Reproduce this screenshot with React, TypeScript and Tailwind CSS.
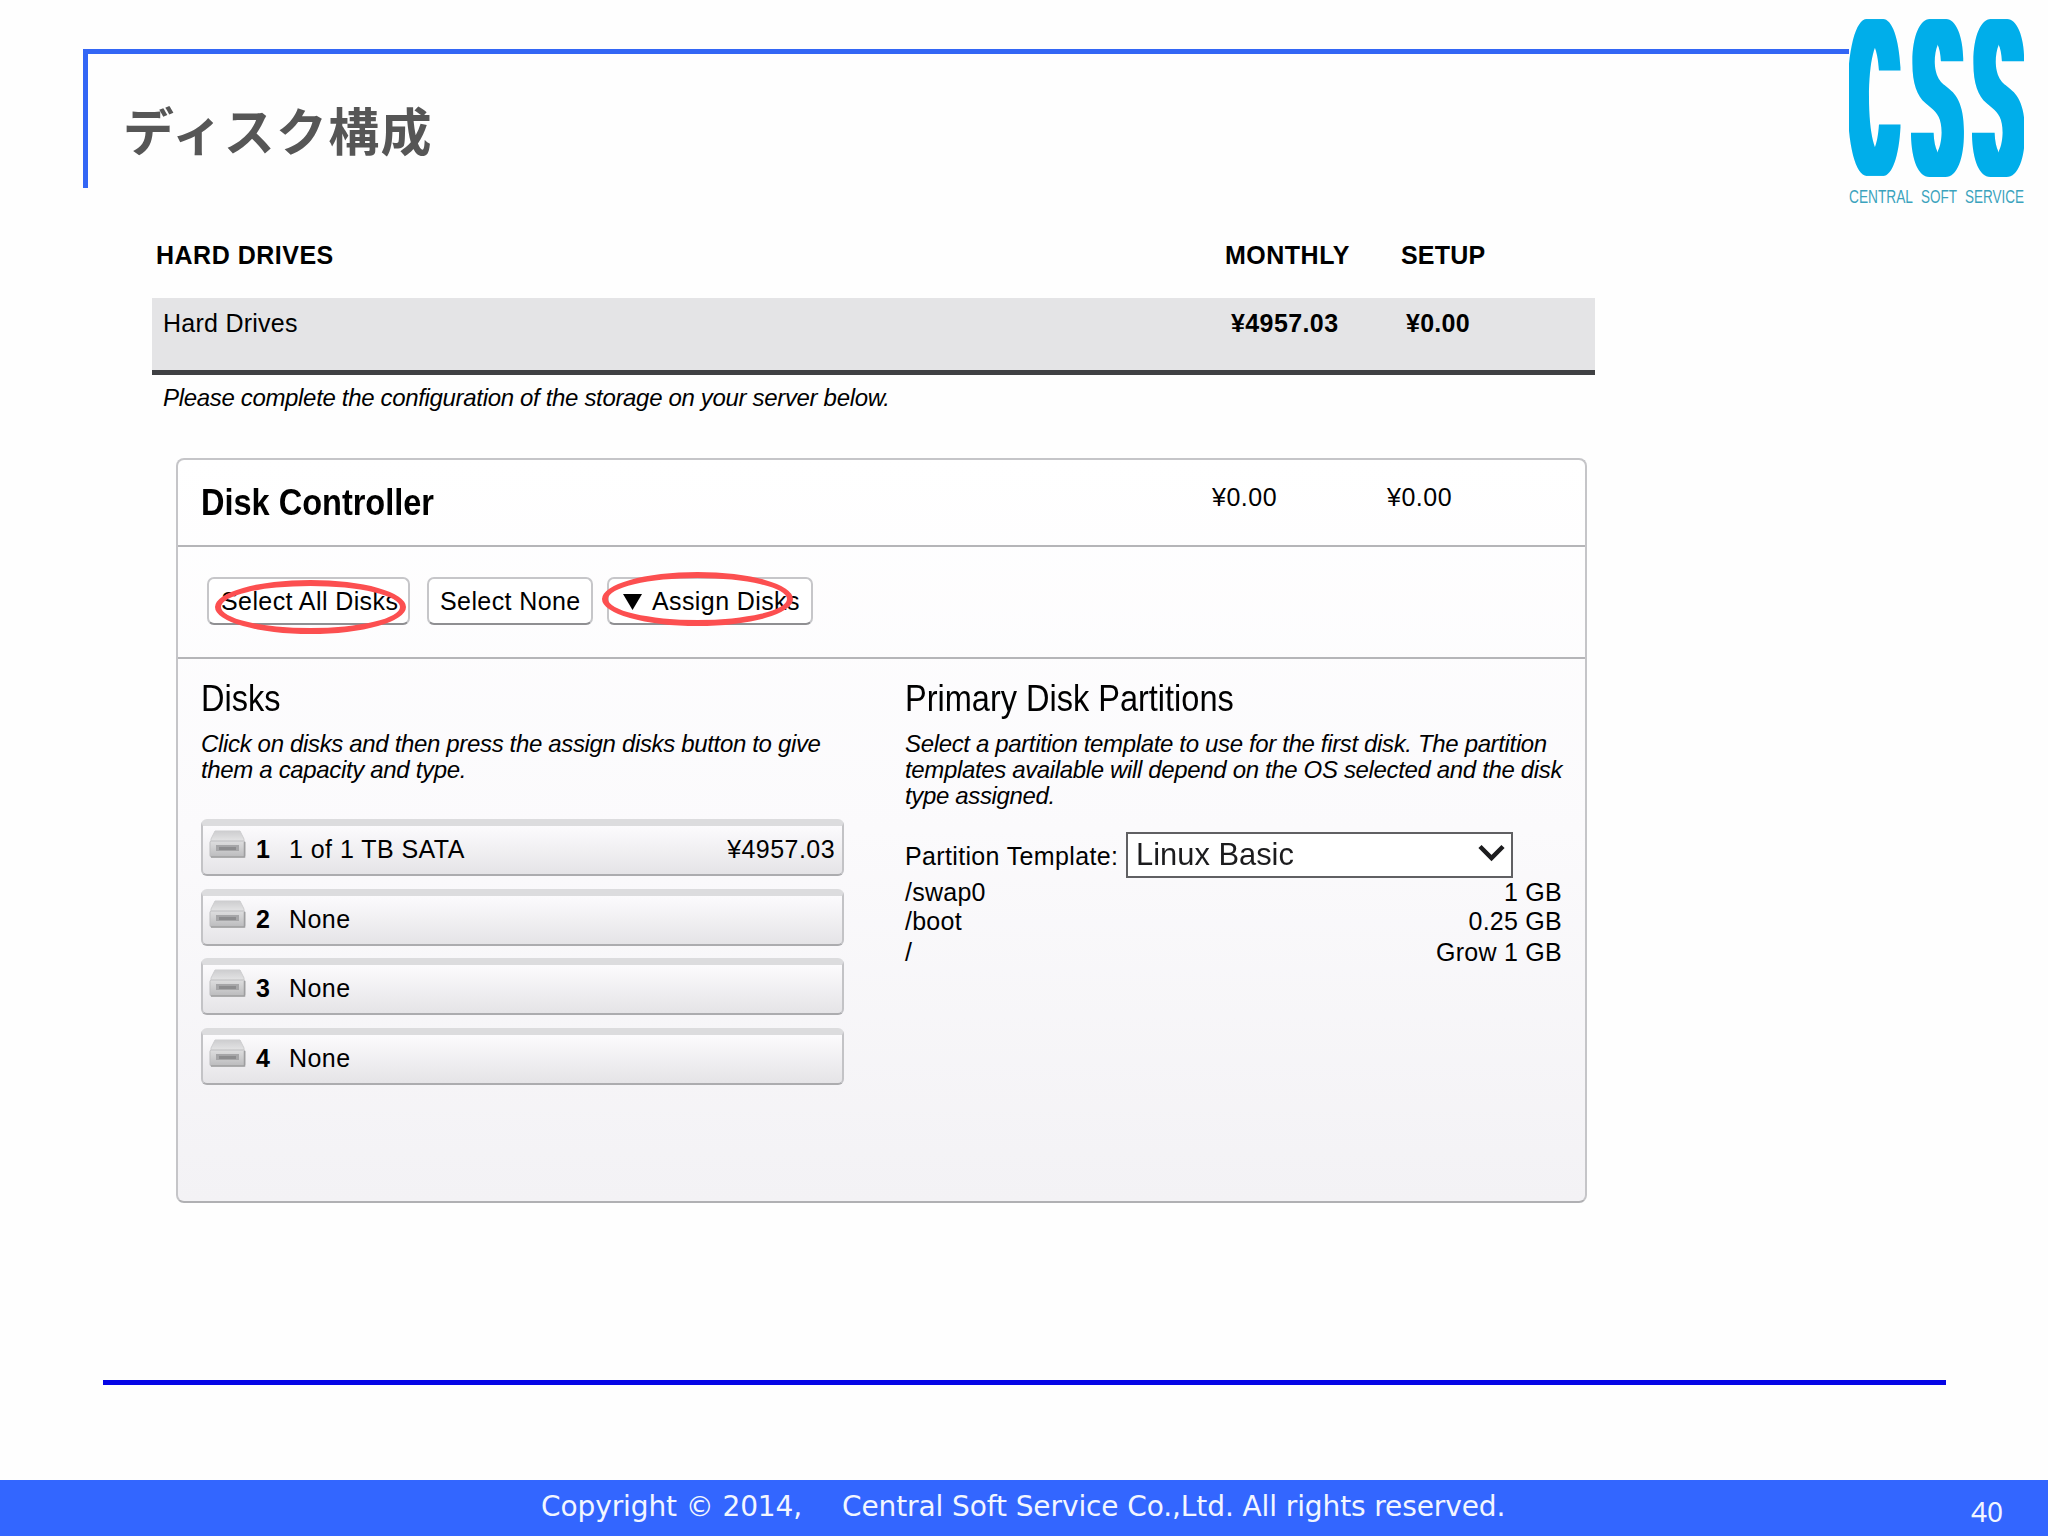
import { useState } from "react";
import { clsx } from "clsx";

interface Disk {
  slot: number;
  label: string;
  price?: string;
}

interface Partition {
  mount: string;
  size: string;
  height: string;
}

const disks: Disk[] = [
  { slot: 1, label: "1 of 1 TB SATA", price: "¥4957.03" },
  { slot: 2, label: "None" },
  { slot: 3, label: "None" },
  { slot: 4, label: "None" },
];

const partitions: Partition[] = [
  { mount: "/swap0", size: "1 GB", height: "h-[28px]" },
  { mount: "/boot", size: "0.25 GB", height: "h-[29px]" },
  { mount: "/", size: "Grow 1 GB", height: "h-[31px]" },
];

function Logo() {
  return (
    <svg
      className="mt-[19px] h-[190px] w-[175px] shrink-0"
      viewBox="0 0 175 190"
      aria-label="CSS Central Soft Service"
    >
      <defs>
        {/* fattens the stems sideways, so the tall letters keep an even stroke */}
        <filter id="stems" filterUnits="userSpaceOnUse" x="0" y="0" width="175" height="160">
          <feMorphology operator="dilate" radius="8 1" />
        </filter>
      </defs>
      <g
        fill="#06aeea"
        filter="url(#stems)"
        fontFamily="Inter, sans-serif"
        fontSize="100"
        fontWeight="400"
      >
        <text transform="translate(3 153.500) scale(0.6 2.07)">C</text>
        <text transform="translate(66 153.500) scale(0.7 2.07)">S</text>
        <text transform="translate(127 153.500) scale(0.7 2.07)">S</text>
      </g>
      <g fill="#3ba3bd" fontFamily="'Liberation Sans', Arial, sans-serif" fontSize="18">
        <text x="0" y="184" textLength="64" lengthAdjust="spacingAndGlyphs">
          CENTRAL
        </text>
        <text x="72" y="184" textLength="36" lengthAdjust="spacingAndGlyphs">
          SOFT
        </text>
        <text x="116" y="184" textLength="59" lengthAdjust="spacingAndGlyphs">
          SERVICE
        </text>
      </g>
    </svg>
  );
}

function DiskIcon() {
  return (
    <svg className="h-[28px] w-[37px]" viewBox="0 0 37 28" aria-hidden="true">
      <defs>
        <linearGradient id="diskTop" x1="0" y1="0" x2="0" y2="1">
          <stop offset="0" stopColor="#cdcdcf" />
          <stop offset="1" stopColor="#e6e6e7" />
        </linearGradient>
        <linearGradient id="diskFront" x1="0" y1="0" x2="0" y2="1">
          <stop offset="0" stopColor="#dededf" />
          <stop offset="1" stopColor="#bbbbbd" />
        </linearGradient>
      </defs>
      <path d="M6 1h25l4 8v3H2V9z" fill="url(#diskTop)" stroke="#cdcdcf" />
      <rect x="1" y="11" width="35" height="16" rx="1.5" fill="url(#diskFront)" stroke="#bdbdbf" />
      <path d="M2 27h33.500V12" fill="none" stroke="#9e9ea0" strokeWidth="1.500" />
      <rect x="7" y="15" width="23" height="6" fill="#a6a6a8" />
      <rect x="10" y="17" width="17" height="3" fill="#8c8c8e" />
    </svg>
  );
}

function ToolButton({ children, className }: { children: React.ReactNode; className: string }) {
  return (
    <button
      type="button"
      className={clsx(
        "flex h-[48px] items-center rounded-[7px] border-2 border-[#c6c6c9] border-b-[#8f8f92] bg-white pt-[2px] tracking-[0.400px] whitespace-nowrap",
        className,
      )}
    >
      {children}
    </button>
  );
}

function Highlight({ className }: { className: string }) {
  return (
    <span
      className={clsx(
        "pointer-events-none absolute h-[54px] w-[191px] rounded-[50%] border-[6px] border-[#fc4f50]",
        className,
      )}
    />
  );
}

function DiskRow({ disk }: { disk: Disk }) {
  return (
    <li className="flex h-[57px] items-start rounded-[6px] border-x-2 border-t-[7px] border-b-2 border-x-[#c3c3c6] border-t-[#dcdcde] border-b-[#acacaf] bg-linear-to-b from-[#fcfbfd] to-[#e5e4e7] pl-[6px] tracking-[0.450px]">
      <span className="mt-[4px]">
        <DiskIcon />
      </span>
      <span className="mt-[9px] w-[41px] pl-[10px] leading-[28px] font-bold">{disk.slot}</span>
      <span className="mt-[9px] pl-[2px] leading-[28px]">{disk.label}</span>
      {disk.price && (
        <span className="mt-[9px] mr-[7px] ml-auto leading-[28px]">{disk.price}</span>
      )}
    </li>
  );
}

function PartitionPanel() {
  const [template] = useState("Linux Basic");

  return (
    <div className="w-[660px]">
      <h3 className="mt-[20px] h-[40px] origin-left scale-x-[0.903] text-[36px] leading-[40px] tracking-normal whitespace-nowrap">
        Primary Disk Partitions
      </h3>
      <p className="mt-[12px] text-[24px] leading-[26px] tracking-[-0.35px] whitespace-nowrap italic">
        Select a partition template to use for the first disk. The partition
        <br />
        templates available will depend on the OS selected and the disk
        <br />
        type assigned.
      </p>
      <div className="mt-[23px] flex h-[46px] items-center">
        <span className="w-[221px] pt-[4px] tracking-[0.350px] whitespace-nowrap">
          Partition Template:
        </span>
        <button
          type="button"
          className="flex h-[46px] w-[387px] items-center justify-between border-2 border-[#606063] bg-white pr-[6px] pl-[8px] text-[32px] leading-none tracking-normal text-[#1c1c1e]"
        >
          <span className="-mt-[2px] origin-left scale-x-[0.965]">{template}</span>
          <svg className="-mt-[4px] h-[18px] w-[27px]" viewBox="0 0 27 18" aria-hidden="true">
            <path d="M2 2.500 13.500 14 25 2.500" fill="none" stroke="#1c1c1e" strokeWidth="4.500" />
          </svg>
        </button>
      </div>
      <ul>
        {partitions.map((p) => (
          <li key={p.mount} className={clsx("flex items-end justify-between pr-[3px]", p.height)}>
            <span className="leading-[27px]">{p.mount}</span>
            <span className="leading-[27px]">{p.size}</span>
          </li>
        ))}
      </ul>
    </div>
  );
}

export default function App() {
  return (
    <div className="flex h-[1536px] w-[2048px] flex-col overflow-hidden bg-[#fefefe] text-black">
      <header className="flex h-[220px] items-start pl-[83px]">
        <div className="mt-[49px] h-[139px] w-[1766px] border-t-[5px] border-l-[5px] border-[#3366f5] pt-[42px] pl-[35px]">
          <h1 className="font-['Noto_Sans_CJK_JP',sans-serif] text-[51px] leading-[66px] font-bold tracking-[1.200px] text-[#565656]">
            ディスク構成
          </h1>
        </div>
        <Logo />
      </header>

      <main className="ml-[152px] h-[1160px] w-[1443px] font-['Liberation_Sans',Arial,sans-serif] text-[25px] tracking-[0.25px]">
        <div className="flex h-[78px] pt-[20px] pl-[4px] leading-[30px] font-bold tracking-[0.5px]">
          <span className="w-[1069px]">HARD DRIVES</span>
          <span className="w-[176px]">MONTHLY</span>
          <span className="tracking-[0.200px]">SETUP</span>
        </div>
        <div className="flex h-[77px] border-b-[5px] border-[#3f4043] bg-[#e4e4e6] pt-[10px] pl-[11px] leading-[30px]">
          <span className="w-[1068px]">Hard Drives</span>
          <span className="w-[175px] font-bold tracking-[0.400px]">¥4957.03</span>
          <span className="font-bold">¥0.00</span>
        </div>
        <p className="h-[83px] pt-[8px] pl-[11px] text-[24px] leading-[30px] tracking-[-0.33px] italic">
          Please complete the configuration of the storage on your server below.
        </p>

        <section className="ml-[24px] h-[745px] w-[1411px] rounded-[8px] border-2 border-[#c5c5c8] border-b-[#b0b0b3] bg-linear-to-b from-white via-[#fbfafc] to-[#f3f2f5]">
          <div className="flex h-[87px] border-b-2 border-[#b5b5b8] pl-[23px]">
            <h2 className="mt-[23px] w-[1011px] text-[36px] leading-[40px] font-bold tracking-normal">
              <span className="inline-block origin-left scale-x-[0.903]">Disk Controller</span>
            </h2>
            <span className="mt-[22px] w-[175px] leading-[30px] tracking-[0.500px]">¥0.00</span>
            <span className="mt-[22px] leading-[30px] tracking-[0.500px]">¥0.00</span>
          </div>

          <div className="relative flex h-[112px] border-b-2 border-[#b5b5b8] pt-[30px] pl-[29px]">
            <ToolButton className="mr-[17px] w-[203px] pl-[12px]">Select All Disks</ToolButton>
            <ToolButton className="mr-[14px] w-[166px] pl-[11px]">Select None</ToolButton>
            <ToolButton className="w-[206px] pl-[14px]">
              <svg className="mr-[10px] h-[16px] w-[19px]" viewBox="0 0 19 16" aria-hidden="true">
                <path d="M0 0h19L9.500 16z" fill="#000" />
              </svg>
              Assign Disks
            </ToolButton>
            <Highlight className="top-[33px] left-[37px]" />
            <Highlight className="top-[25px] left-[424px]" />
          </div>

          <div className="flex pl-[23px]">
            <div className="mr-[61px] w-[643px]">
              <h3 className="mt-[20px] h-[40px] origin-left scale-x-[0.903] text-[36px] leading-[40px] tracking-normal">
                Disks
              </h3>
              <p className="mt-[12px] text-[24px] leading-[26px] tracking-[-0.34px] whitespace-nowrap italic">
                Click on disks and then press the assign disks button to give
                <br />
                them a capacity and type.
              </p>
              <ul className="mt-[36px] flex flex-col gap-[12.700px]">
                {disks.map((disk) => (
                  <DiskRow key={disk.slot} disk={disk} />
                ))}
              </ul>
            </div>
            <PartitionPanel />
          </div>
        </section>
      </main>

      <div className="ml-[103px] h-[100px] w-[1843px] border-t-[5px] border-[#0505e6]" />

      <footer className="flex h-[56px] items-start bg-[#3366ff] font-['DejaVu_Sans',Verdana,sans-serif] text-[28px] text-[#f2f6ff]">
        <p className="flex w-[1971px] pt-[10px] pl-[541px] leading-[34px] tracking-[-0.100px] whitespace-pre">
          <span className="w-[301px]">Copyright © 2014,</span>
          <span>Central Soft Service Co.,Ltd. All rights reserved.</span>
        </p>
        <span className="pt-[14px] font-['Noto_Sans',sans-serif] leading-[34px]">40</span>
      </footer>
    </div>
  );
}
